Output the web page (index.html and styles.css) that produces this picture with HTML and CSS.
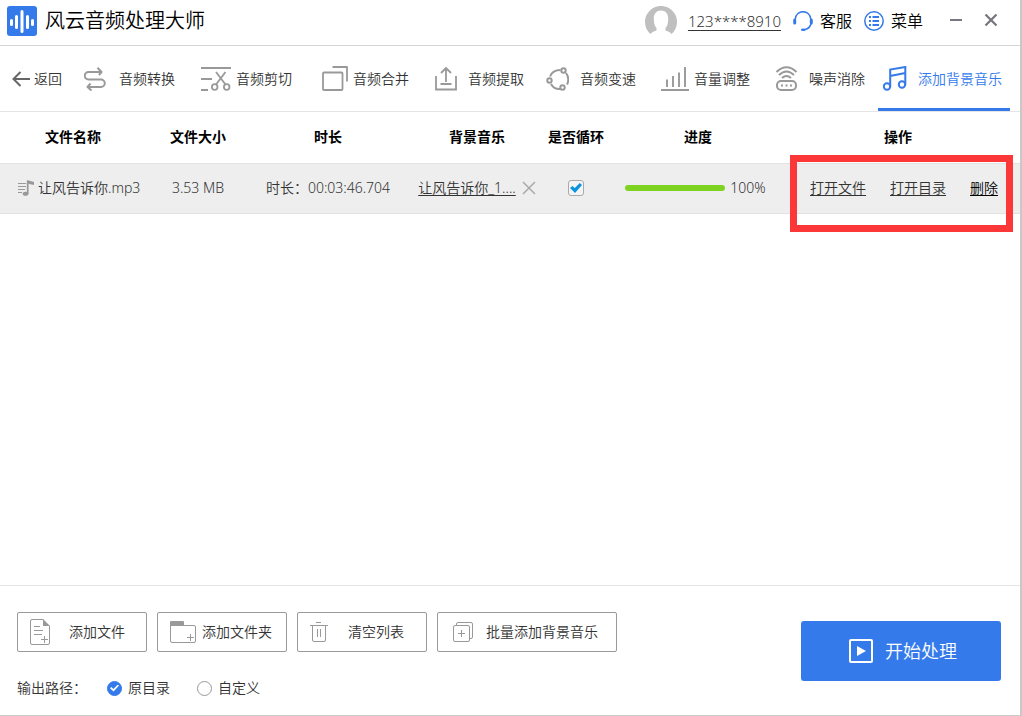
FILE: index.html
```
<!DOCTYPE html>
<html lang="zh-CN">
<head>
<meta charset="utf-8">
<title>风云音频处理大师</title>
<link rel="stylesheet" href="styles.css">
</head>
<body>
<div class="window">
  <header class="titlebar">
    <svg class="logo" width="30" height="30" viewBox="0 0 30 30" aria-hidden="true">
      <rect width="30" height="30" rx="3" fill="#347aeb"/>
      <g stroke="#fff" stroke-width="3" stroke-linecap="round"><path d="M4.500 14.500v4M9.500 10.500v11M15 5.500v20M20.500 10.500v11M25.500 14.500v4"/></g>
    </svg>
    <h1 class="title">风云音频处理大师</h1>
    <div class="account">
      <svg width="32" height="30" viewBox="0 0 32 30" aria-hidden="true">
        <path fill="#bfbfbf" d="M5.500 28A16 16 0 1 1 26.500 28C25.500 26.500 23.500 25.500 20.500 24.500V22C22.500 20 23.200 17 23.200 12.500C23.200 7.500 20.500 4.500 16 4.500S8.800 7.500 8.800 12.500C8.800 17 9.500 20 11.500 22V24.500C8.500 25.500 6.500 26.500 5.500 28z"/>
      </svg>
      <a class="phone" href="#">123****8910</a>
    </div>
    <a class="toplink" href="#">
      <svg width="20" height="20" viewBox="0 0 20 20" fill="none" stroke="#347aeb" stroke-width="1.500" aria-hidden="true">
        <path d="M2.300 8C3-1.800 17-1.800 17.700 8M18 12.500Q17 17.500 12 18.500"/>
        <path stroke-width="3" stroke-linecap="round" d="M1.700 9v3M18.300 9v3"/>
        <ellipse cx="10.300" cy="18.700" rx="2.500" ry="1.300" fill="#347aeb" stroke="none"/>
      </svg>客服</a>
    <a class="toplink" href="#">
      <svg width="20" height="20" viewBox="0 0 20 20" fill="none" stroke="#347aeb" aria-hidden="true">
        <circle cx="10" cy="10" r="9.200" stroke-width="1.500"/>
        <path stroke-width="1.800" d="M5 6h2M5 10h2M5 14h2M8.500 6h6.500M8.500 10h6.500M8.500 14h6.500"/>
      </svg>菜单</a>
    <div class="winbtns">
      <button class="winbtn" type="button" aria-label="最小化"><svg width="14" height="14" viewBox="0 0 14 14"><path d="M1 6h12" stroke="#76767e" stroke-width="2"/></svg></button>
      <button class="winbtn" type="button" aria-label="关闭"><svg width="14" height="14" viewBox="0 0 14 14"><path d="M1.500 .5l11 11M12.500 .5l-11 11" stroke="#76767e" stroke-width="2.200"/></svg></button>
    </div>
  </header>

  <nav class="toolbar">
    <a class="back" href="#"><svg width="18" height="16" viewBox="0 0 18 16" fill="none" stroke="#666" stroke-width="2"><path d="M18 8H1.500M8.500 1L1.500 8l7 7"/></svg>返回</a>
    <a class="tool" href="#"><span class="icon"><svg width="22" height="24" viewBox="0 0 22 24" fill="none" stroke="#999" stroke-width="2" stroke-linejoin="round"><path d="M13.500 .8L17.500 5l-2.500 3M17.500 5H4.500a3.700 3.700 0 0 0 0 7.500H17a3.700 3.700 0 0 1 0 7.500H3.500M6.500 16.500L3.500 20l4 3.500"/></svg></span>音频转换</a>
    <a class="tool" href="#"><span class="icon"><svg width="30" height="24" viewBox="0 0 30 24" fill="none" stroke="#999" stroke-width="1.800"><path d="M0 1h30M0 12h11M0 23h7M15 5l9.500 12.500M24.500 5L15 17.500"/><circle cx="13.700" cy="20" r="2.800"/><circle cx="25.700" cy="20" r="2.800"/></svg></span>音频剪切</a>
    <a class="tool" href="#"><span class="icon end"><svg width="26" height="25" viewBox="0 0 26 25" fill="none" stroke="#999" stroke-width="1.800" stroke-linejoin="round"><rect x="1" y="6.500" width="19.500" height="17.500" rx="1"/><path d="M10.500 1H25v14.500"/></svg></span>音频合并</a>
    <a class="tool" href="#"><span class="icon"><svg width="24" height="25" viewBox="0 0 24 25" fill="none" stroke="#999" stroke-width="1.800"><path d="M3 10v13.500h20V10M13 16V2M8 7l5-5 5 5M7.500 18h11"/></svg></span>音频提取</a>
    <a class="tool" href="#"><span class="icon"><svg width="24" height="24" viewBox="0 0 24 24" fill="none" stroke="#999" stroke-width="2"><path d="M5 9.500Q7.500 3 15.500 3M21 6Q25 11.500 22 17.500M15.500 22Q9 22.500 6 17"/><circle cx="18.500" cy="3.500" r="2.200"/><circle cx="4.500" cy="13.500" r="2.200"/><circle cx="17.500" cy="20.500" r="2.200"/></svg></span>音频变速</a>
    <a class="tool" href="#"><span class="icon"><svg width="30" height="24" viewBox="0 0 30 24" fill="none" stroke="#999" stroke-width="1.900"><path d="M2 23h28M8 12.500v7.500M14 9v11M20 5.500V20M26 0v20"/></svg></span>音量调整</a>
    <a class="tool" href="#"><span class="icon"><svg width="24" height="25" viewBox="0 0 24 25" fill="none" stroke="#999" stroke-width="2"><path d="M2.500 6Q12.500-3.500 22.500 6M5 9Q12.500 2 20 9M8 12Q12.500 8 17 12"/><rect x="3" y="15" width="19" height="9" rx="4"/><path d="M7 19.500h2M11.500 19.500h2M16 19.500h2" stroke-width="2"/></svg></span>噪声消除</a>
    <a class="tool active" href="#" aria-current="page"><span class="icon"><svg width="24" height="25" viewBox="0 0 24 25" fill="none" stroke="#347aeb" stroke-width="2"><circle cx="4" cy="20.500" r="3.200"/><circle cx="19" cy="18.500" r="3.200"/><path d="M7.200 20.500V3.500L22.300 1v17.500M7.200 10L22.300 7"/></svg></span>添加背景音乐</a>
  </nav>

  <main class="content">
    <table class="files">
      <colgroup><col class="c-name"><col class="c-size"><col class="c-time"><col class="c-music"><col class="c-loop"><col class="c-prog"><col class="c-act"></colgroup>
      <thead>
        <tr><th>文件名称</th><th>文件大小</th><th>时长</th><th>背景音乐</th><th>是否循环</th><th>进度</th><th class="act-head">操作</th></tr>
      </thead>
      <tbody>
        <tr>
          <td><div class="cell name"><svg width="16" height="16" viewBox="0 0 16 16" fill="none" stroke="#999"><path d="M0 3.500h8M0 6.500h8M0 9.500h7M0 12.500h4"/><ellipse cx="7.500" cy="13.700" rx="2.800" ry="2" fill="#999" stroke="none"/><path d="M9.700 14V1" stroke-width="1.800"/><path d="M9 0L16 2v3L9 3.500z" fill="#999" stroke="none"/></svg>让风告诉你.mp3</div></td>
          <td>3.53 MB</td>
          <td>时长：00:03:46.704</td>
          <td><div class="cell music"><a href="#">让风告诉你_1....</a><button class="clear" type="button" aria-label="移除背景音乐"><svg width="14" height="14" viewBox="0 0 14 14"><path d="M1 1l12 12M13 1L1 13" stroke="#aaa" stroke-width="1.500"/></svg></button></div></td>
          <td><input class="check" type="checkbox" checked aria-label="是否循环"></td>
          <td><div class="cell progress"><span class="bar"><span class="fill" style="width:100%"></span></span>100%</div></td>
          <td class="act"><div class="cell actions"><a href="#">打开文件</a><a href="#">打开目录</a><a class="delete" href="#">删除</a></div><span class="highlight"></span></td>
        </tr>
      </tbody>
    </table>
  </main>

  <footer class="footer">
    <div class="controls">
      <div class="buttons">
        <button class="btn" type="button"><svg width="20" height="26" viewBox="0 0 20 26" fill="none" stroke="#999"><path d="M13.500.5H2Q.5.5.5 2v22q0 1.500 1.500 1.500h16q1.500 0 1.500-1.500V7"/><path d="M13 0l7 7h-7z" fill="#999" stroke="none"/><path d="M4 7.500h6M4 11.500h9M4 15.500h8M11 20.500h7M14.500 17v7"/></svg><span class="label">添加文件</span></button>
        <button class="btn folder" type="button"><svg width="26" height="22" viewBox="0 0 26 22" fill="none" stroke="#999"><path d="M.5 4v16q0 1.500 1.500 1.500h22q1.500 0 1.500-1.500V6q0-1.500-1.500-1.500H.5"/><path d="M0 5V1q0-1 1-1h12q1 0 1 1v4z" fill="#999" stroke="none"/><path d="M17 16.500h7M20.500 13v7"/></svg><span class="label">添加文件夹</span></button>
        <button class="btn" type="button"><svg width="18" height="20" viewBox="0 0 18 20" fill="none" stroke="#999"><path d="M0 3.500h18M6 .5h5M2.500 3.500V18q0 1.500 1.500 1.500h10q1.500 0 1.500-1.500V3.500M7.500 7v8M10.500 7v8"/></svg><span class="label">清空列表</span></button>
        <button class="btn wide" type="button"><svg width="20" height="20" viewBox="0 0 20 20" fill="none" stroke="#999"><rect x=".5" y="3.500" width="16" height="16" rx="1.500"/><path d="M3.500 3V2Q3.500.5 5 .5h13q1.500 0 1.500 1.500v13q0 1.500-1.500 1.500h-1M5 11.500h7M8.500 8v7"/></svg><span class="label">批量添加背景音乐</span></button>
      </div>
      <div class="output">
        <span class="caption">输出路径：</span>
        <label class="choice"><input class="radio" type="radio" name="dir" checked>原目录</label>
        <label class="choice"><input class="radio" type="radio" name="dir">自定义</label>
      </div>
    </div>
    <button class="start" type="button"><svg width="24" height="24" viewBox="0 0 24 24"><rect x="1" y="1" width="22" height="22" rx="1" fill="none" stroke="#fff" stroke-width="2"/><path d="M8 7l9 5-9 5z" fill="#fff"/></svg>开始处理</button>
  </footer>
</div>
</body>
</html>
```

FILE: styles.css
```
* { box-sizing: border-box; }

body {
  margin: 0;
  font: 14px/20px "Noto Sans", "Noto Sans CJK SC", sans-serif;
  font-weight: 350;
  color: #333;
  background: #fff;
}

button { font: inherit; color: inherit; cursor: pointer; }
a { color: inherit; }
svg { display: block; flex: none; }

.window {
  display: flex;
  flex-direction: column;
  min-height: 100vh;
  border-right: 2px solid #c8c8c8;
  border-bottom: 1px solid #ccc;
}

.titlebar {
  display: flex;
  align-items: center;
  height: 46px;
  padding: 0 22px 4px 7px;
  border-bottom: 1px solid #d4d4d4;
  color: #000;
  font-size: 16px;
}
.title { margin: 0 auto 0 8px; font-size: 20px; line-height: 28px; font-weight: 350; }
.account { display: flex; align-items: center; gap: 11px; margin-right: 12px; }
.phone { color: #333; font-size: 15px; text-underline-offset: 3px; }
.toplink { display: flex; align-items: center; gap: 7px; margin-right: 12px; text-decoration: none; }
.winbtns { display: flex; gap: 21px; margin-left: 14px; }
.winbtn { padding: 0; border: 0; background: none; }

.toolbar {
  display: grid;
  grid-template-columns: 84fr 117fr 117fr 115fr 112fr 114fr 115fr 104fr 132fr 10fr;
  height: 66px;
  border-bottom: 1px solid #e5e5e5;
}
.toolbar a { display: flex; align-items: center; text-decoration: none; white-space: nowrap; }
.back { gap: 4px; padding-left: 12px; }
.icon { display: flex; width: 35px; }
.icon.end { padding-left: 4px; }
.toolbar .active { padding: 3px 0 0 5px; border-bottom: 3px solid #347aeb; color: #347aeb; }

.content { flex: 1; }
.files { width: 100%; table-layout: fixed; border-collapse: collapse; text-align: center; white-space: nowrap; }
.c-name { width: 146px; }
.c-size { width: 104px; }
.c-time { width: 156px; }
.c-music { width: 142px; }
.c-loop { width: 56px; }
.c-prog { width: 188px; }
.c-act { width: 228px; }
.files th, .files td { padding: 0; border-bottom: 1px solid #e2e2e2; }
.files th { height: 51px; color: #000; font-weight: 700; }
.files td { height: 50px; background: #eee; }
.files .act-head { padding-right: 16px; }
.cell { display: flex; align-items: center; justify-content: center; }
.name { justify-content: flex-start; gap: 4px; padding-left: 18px; }
.music { gap: 6px; }
.clear { padding: 0; border: 0; background: none; }
.progress { gap: 5px; padding-right: 5px; }
.bar { width: 100px; height: 6px; border-radius: 3px; background: #ddd; overflow: hidden; }
.fill { display: block; height: 100%; background: #7ed321; }
.act { position: relative; }
.actions { justify-content: flex-start; gap: 24px; padding-left: 18px; }
.delete { color: #000; }
.files a { text-underline-offset: 2px; }
.highlight {
  position: absolute;
  inset: -9px 7px -19px -2px;
  border: 7px solid #fc3737;
  pointer-events: none;
}

.check, .radio { display: grid; place-content: center; appearance: none; margin: 0; }
.check { width: 16px; height: 16px; margin: 0 auto; border: 1px solid #aaa; border-radius: 3px; background: #f4f4f4; }
.check:checked::after {
  content: "";
  width: 12px;
  height: 10px;
  background: #0a94e0;
  clip-path: polygon(0 50%, 20% 30%, 40% 50%, 82% 0, 100% 20%, 42% 100%);
}
.radio { width: 15px; height: 15px; border: 1px solid #999; border-radius: 50%; background: #fff; }
.radio:checked { border-color: #347aeb; background: #347aeb; }
.radio:checked::after {
  content: "";
  width: 9px;
  height: 7px;
  background: #fff;
  clip-path: polygon(0 55%, 15% 35%, 38% 65%, 88% 0, 100% 15%, 40% 100%);
}

.footer {
  display: flex;
  align-items: flex-start;
  justify-content: space-between;
  padding: 26px 19px 17px 17px;
  border-top: 1px solid #e5e5e5;
}
.buttons { display: flex; gap: 10px; }
.btn {
  display: flex;
  align-items: center;
  width: 130px;
  height: 40px;
  padding: 0 12px;
  border: 1px solid #999;
  border-radius: 2px;
  background: #fff;
  white-space: nowrap;
}
.btn .label { flex: 1; padding-left: 10px; text-align: center; }
.btn.folder .label { padding-left: 4px; }
.wide { width: 180px; padding: 0 15px; }
.output { display: flex; align-items: center; margin-top: 26px; }
.caption { width: 90px; }
.choice { display: flex; align-items: center; gap: 6px; width: 90px; }
.start {
  display: flex;
  align-items: center;
  justify-content: center;
  gap: 12px;
  width: 200px;
  height: 60px;
  margin-top: 9px;
  padding: 0 0 0 4px;
  border: 0;
  border-radius: 3px;
  background: #347aeb;
  color: #fff;
  font-size: 18px;
}
```
